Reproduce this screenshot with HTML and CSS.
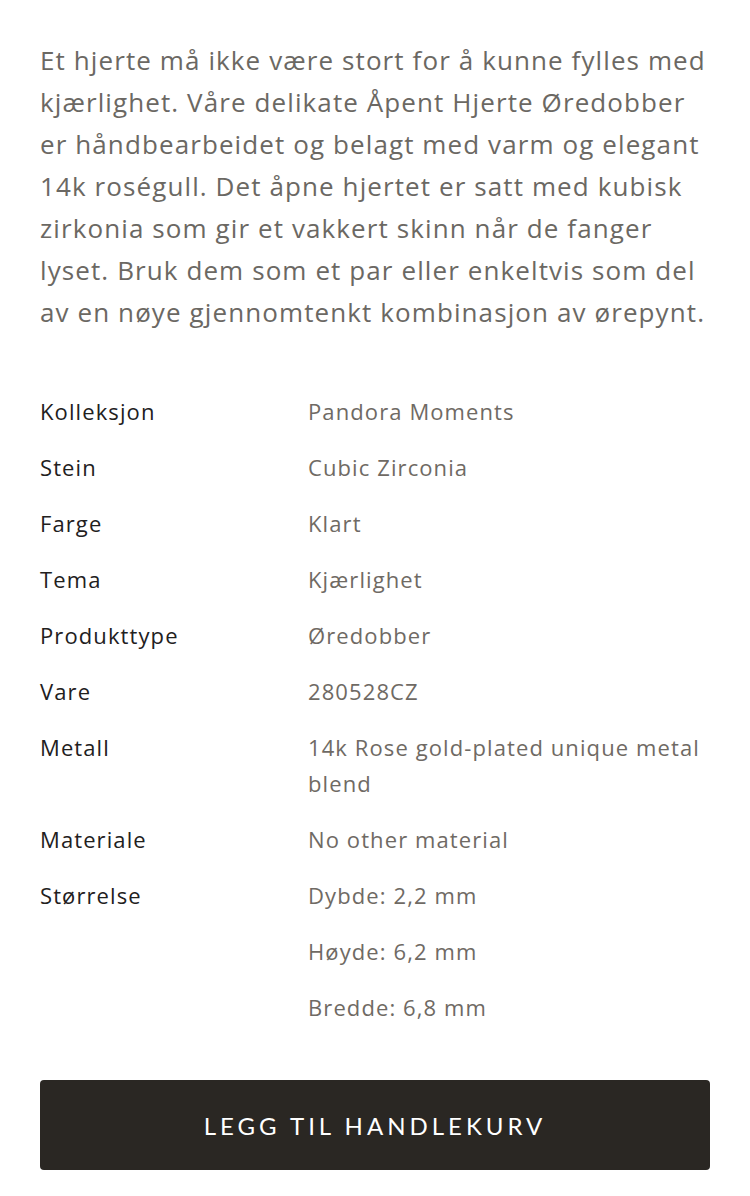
FILE: index.html
```html
<!DOCTYPE html>
<html lang="no">
<head>
<meta charset="utf-8">
<link rel="stylesheet" href="styles.css">
</head>
<body>
<main class="product">
  <p class="desc">Et hjerte må ikke være stort for å kunne fylles med kjærlighet. Våre delikate Åpent Hjerte Øredobber er håndbearbeidet og belagt med varm og elegant 14k roségull. Det åpne hjertet er satt med kubisk zirkonia som gir et vakkert skinn når de fanger lyset. Bruk dem som et par eller enkeltvis som del av en nøye gjennomtenkt kombinasjon av ørepynt.</p>
  <dl class="specs">
    <div class="row"><dt>Kolleksjon</dt><dd>Pandora Moments</dd></div>
    <div class="row"><dt>Stein</dt><dd>Cubic Zirconia</dd></div>
    <div class="row"><dt>Farge</dt><dd>Klart</dd></div>
    <div class="row"><dt>Tema</dt><dd>Kjærlighet</dd></div>
    <div class="row"><dt>Produkttype</dt><dd>Øredobber</dd></div>
    <div class="row"><dt>Vare</dt><dd>280528CZ</dd></div>
    <div class="row"><dt>Metall</dt><dd>14k Rose gold-plated unique metal blend</dd></div>
    <div class="row"><dt>Materiale</dt><dd>No other material</dd></div>
    <div class="row"><dt>Størrelse</dt><dd class="multi"><span>Dybde: 2,2 mm</span><span>Høyde: 6,2 mm</span><span>Bredde: 6,8 mm</span></dd></div>
  </dl>
  <button class="cta" type="button">LEGG TIL HANDLEKURV</button>
</main>
</body>
</html>
```
FILE: styles.css
```css
html, body {
  margin: 0;
  padding: 0;
  background: #ffffff;
}
body {
  font-family: "Open Sans", Lato, sans-serif;
}
.product {
  padding: 39px 40px 0 40px;
}
.desc {
  margin: 0;
  font-size: 26px;
  line-height: 42px;
  letter-spacing: 1.1px;
  color: #6b6863;
}
.specs {
  margin: 60px 0 0 0;
  display: flex;
  flex-direction: column;
  gap: 20px;
  font-size: 22px;
  line-height: 36px;
  letter-spacing: 1.1px;
}
.row {
  display: grid;
  grid-template-columns: 268px 1fr;
}
.specs dt {
  color: #22201d;
}
.specs dd {
  margin: 0;
  color: #6f6a64;
}
.multi {
  display: flex;
  flex-direction: column;
  gap: 20px;
}
.cta {
  display: block;
  width: 100%;
  height: 90px;
  margin-top: 55px;
  border: 0;
  border-radius: 4px;
  background: #2a2723;
  color: #ffffff;
  font-family: Lato, "Open Sans", sans-serif;
  font-size: 24px;
  letter-spacing: 4px;
}
```
